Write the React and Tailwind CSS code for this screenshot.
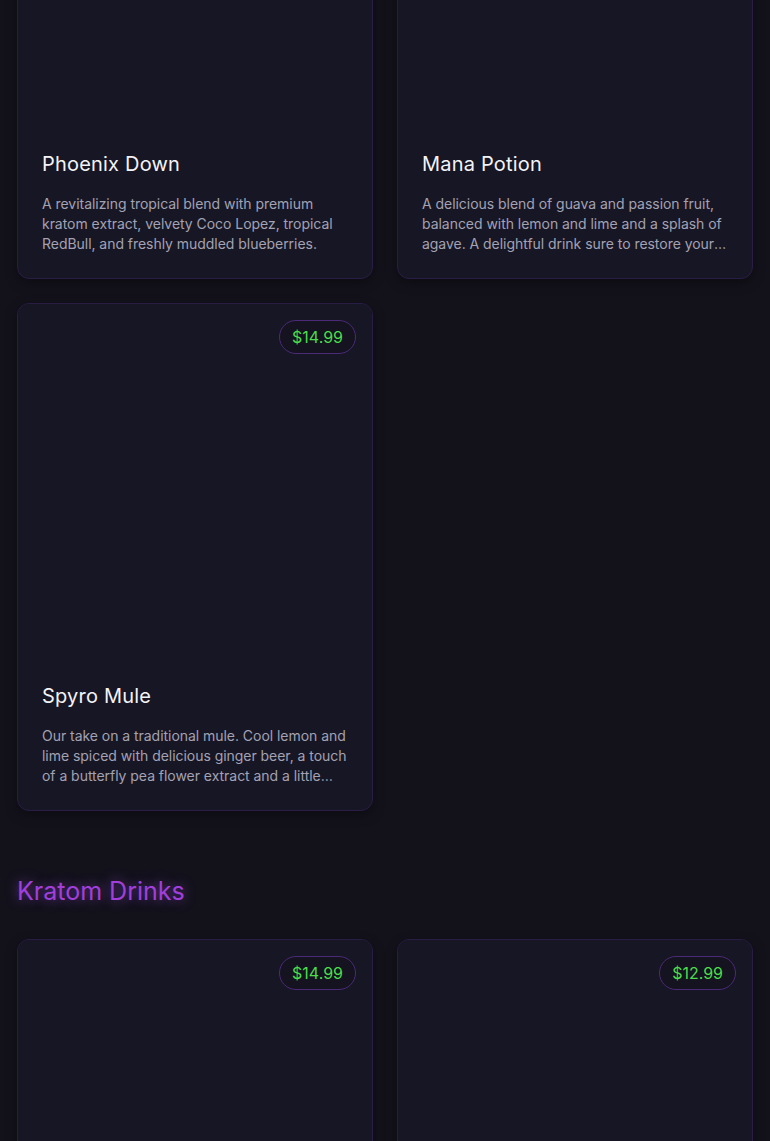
const sections = [
  {
    title: null,
    items: [
      {
        name: 'Phoenix Down',
        price: '$14.99',
        desc: 'A revitalizing tropical blend with premium kratom extract, velvety Coco Lopez, tropical RedBull, and freshly muddled blueberries.',
      },
      {
        name: 'Mana Potion',
        price: '$12.99',
        desc: 'A delicious blend of guava and passion fruit, balanced with lemon and lime and a splash of agave. A delightful drink sure to restore your mana and keep you casting all night long.',
      },
      {
        name: 'Spyro Mule',
        price: '$14.99',
        desc: 'Our take on a traditional mule. Cool lemon and lime spiced with delicious ginger beer, a touch of a butterfly pea flower extract and a little sparkle of dragon fire to finish it off.',
      },
    ],
  },
  {
    title: 'Kratom Drinks',
    items: [
      { name: 'Kava Colada', price: '$14.99', desc: 'Creamy coconut and pineapple.' },
      { name: 'Green Haze', price: '$12.99', desc: 'Citrus and mint.' },
    ],
  },
]

function DrinkCard({ item }) {
  return (
    <div className="relative overflow-hidden rounded-xl border border-[#2a1d45] bg-[#171624] shadow-[0_4px_12px_rgba(0,0,0,0.35)]">
      <div className="aspect-square w-full bg-[#171624]" />
      <span className="absolute right-4 top-4 rounded-full border border-[#4b2a78] bg-[#15131f] px-3 py-[5px] text-base leading-[22px] text-[#4ade4a]">
        {item.price}
      </span>
      <div className="p-6">
        <h3 className="mb-4 text-xl leading-7 tracking-[0.2px] text-[#f3f3f7]">{item.name}</h3>
        <p className="line-clamp-3 text-sm leading-5 tracking-[-0.04px] text-[#a3a2b3]">{item.desc}</p>
      </div>
    </div>
  )
}

export default function App() {
  return (
    <div className="min-h-screen bg-[#13121b] font-['Inter',sans-serif]">
      <div className="-mt-[229px] px-[17px] pb-16">
        {sections.map((section, i) => (
          <section key={i} className={i > 0 ? 'mt-16' : ''}>
            {section.title && (
              <h2 className="mb-8 text-[25px] leading-8 text-[#a23fdc] [text-shadow:0_0_12px_rgba(168,85,247,0.6)]">
                {section.title}
              </h2>
            )}
            <div className="grid grid-cols-2 gap-6">
              {section.items.map((item) => (
                <DrinkCard key={item.name} item={item} />
              ))}
            </div>
          </section>
        ))}
      </div>
    </div>
  )
}
